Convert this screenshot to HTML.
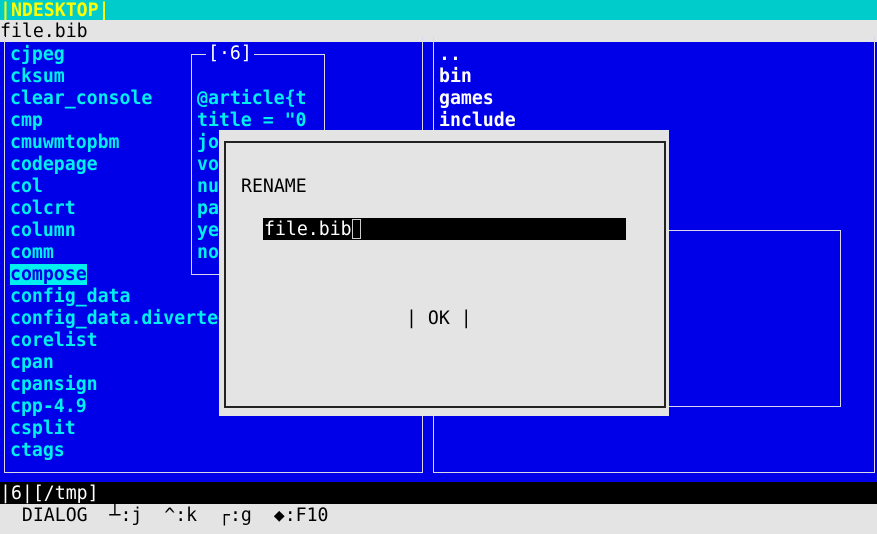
<!DOCTYPE html>
<html><head><meta charset="utf-8"><style>
*{margin:0;padding:0;box-sizing:border-box}
html,body{background:#0000e8}
body{width:877px;height:525px;overflow:hidden;position:relative;font-family:"DejaVu Sans Mono","Liberation Mono",monospace;font-size:18.2px;line-height:22px}
.a{position:absolute;white-space:pre}
.b{font-weight:bold}
.c{color:#00f0f0}
.w{color:#fff}
.ln{position:absolute;border:1px solid #d8d8e8}
</style></head><body>
<div class="a b" style="left:0;top:0;width:877px;height:20px;line-height:21px;background:#00cccc;color:#ffff00">|NDESKTOP|</div>
<div class="a" style="left:0;top:20px;width:877px;height:22px;line-height:24px;background:#e4e4e4;color:#000">file.bib</div>

<div class="ln" style="left:4px;top:36px;width:419px;height:437px;border-top:none"></div>
<div class="ln" style="left:433px;top:36px;width:442px;height:437px;border-top:none"></div>

<div class="a b c" style="left:10px;top:44px">cjpeg
cksum
clear_console
cmp
cmuwmtopbm
codepage
col
colcrt
column
comm
<span style="background:#00f0f0;color:#0000e8">compose</span>
config_data
config_data.diverted
corelist
cpan
cpansign
cpp-4.9
csplit
ctags</div>

<div class="a b w" style="left:439px;top:44px">..
bin
games
include</div>

<div class="ln" style="left:191px;top:54px;width:134px;height:221px"></div>
<div class="a w" style="left:206px;top:43px;background:#0000e8;padding:0 2px">[·6]</div>
<div class="a b c" style="left:197px;top:88px">@article{t
title = "0
journal =
volume =
number =
pages =
year =
note =</div>

<div class="ln" style="left:600px;top:230px;width:241px;height:177px"></div>

<div class="a" style="left:219px;top:130px;width:450px;height:286px;background:#e4e4e4"></div>
<div class="a" style="left:224px;top:141px;width:442px;height:267px;border:2px solid #222"></div>
<div class="a" style="left:241px;top:176px;color:#000">RENAME</div>
<div class="a" style="left:263px;top:218px;width:363px;height:22px;background:#000"></div>
<div class="a" style="left:264px;top:219px;color:#fff">file.bib</div>
<div class="a" style="left:352px;top:219px;width:9px;height:20px;border:1px solid #ccc;background:#000"></div>
<div class="a" style="left:406px;top:308px;color:#000">| OK |</div>

<div class="a" style="left:0;top:482px;width:877px;height:22px;line-height:24px;background:#000;color:#fff">|6|[/tmp]</div>
<div class="a" style="left:0;top:504px;width:877px;height:30px;line-height:24px;background:#e4e4e4;color:#000">  DIALOG  ┴:j  ^:k  ┌:g  ◆:F10</div>
</body></html>
